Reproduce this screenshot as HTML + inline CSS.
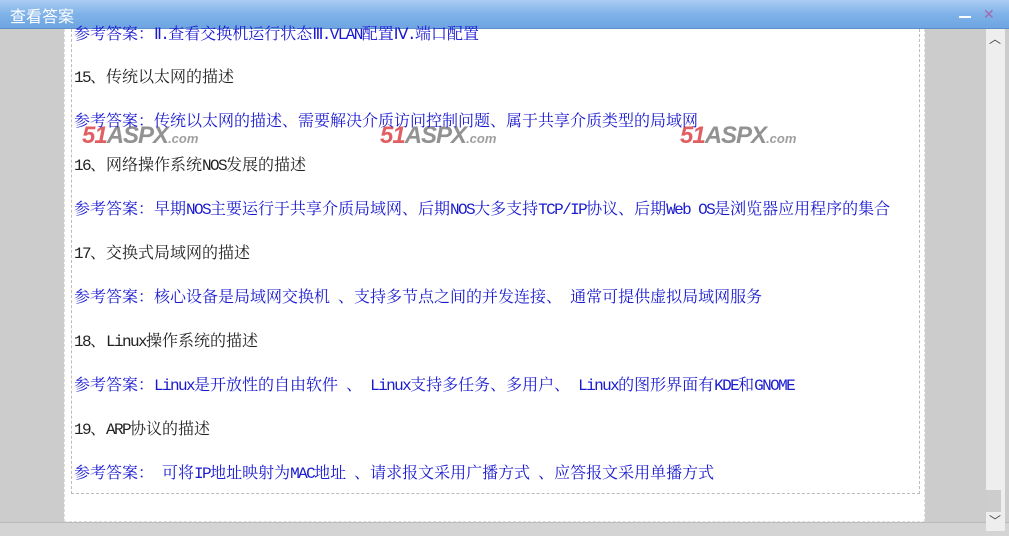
<!DOCTYPE html>
<html><head><meta charset="utf-8"><style>
*{margin:0;padding:0;box-sizing:border-box}
body{width:1009px;height:536px;overflow:hidden;background:#ccc;position:relative;font-family:"Noto Serif CJK SC","Noto Sans CJK SC",serif;}
.title{position:absolute;left:0;top:0;width:1009px;height:29px;background:linear-gradient(#a9cdf2,#7fb2e8 50%,#6da5e2);border-bottom:1px solid #5b8fcc;color:#fff;font:16px "Liberation Sans","Noto Sans CJK SC",sans-serif;padding:3px 0 0 10px}
.min{position:absolute;left:959px;top:16px;width:12px;height:2px;background:#fff}
.x{position:absolute;left:983px;top:6px;color:#a06bb0;font:14px "Liberation Sans",sans-serif}
.panel{position:absolute;left:64px;top:29px;width:861px;height:493px;background:#fff;border:1px dashed #ddd;border-top:none}
.inner{position:absolute;left:71px;top:29px;width:849px;height:465px;border:1px dashed #bbb;border-top:none;overflow:hidden}
.bot{position:absolute;left:0;top:522px;width:1009px;height:14px;background:#d4d4d4;border-top:1px solid #bbb}
.sb{position:absolute;left:986px;top:29px;width:19px;height:502px;background:#eee}
.thumb{position:absolute;left:986px;top:490px;width:15px;height:22px;background:#cdcdcd}
.l{position:absolute;left:74px;font-size:16px;line-height:20px;white-space:nowrap;color:#222}
.l span{font-family:"Liberation Mono",monospace;font-size:16px;letter-spacing:-1.6px}
.a{color:#1a1ad0}
.wm{position:absolute;font:italic bold 24px "Liberation Sans",sans-serif;letter-spacing:-1px;opacity:.8}
.wm b{color:#d9383c}.wm i{color:#777}.wm s{text-decoration:none;font-size:13px;color:#888;letter-spacing:0}
</style></head><body>
<div class="title">查看答案</div><div class="min"></div><div class="x">✕</div>
<div class="panel"></div>
<div class="inner"></div>
<div class="wm" style="left:82px;top:122px"><b>51</b><i>ASPX</i><s>.com</s></div>
<div class="wm" style="left:380px;top:122px"><b>51</b><i>ASPX</i><s>.com</s></div>
<div class="wm" style="left:680px;top:122px"><b>51</b><i>ASPX</i><s>.com</s></div>
<div class="l a" style="top:23px">参考答案：<span>Ⅱ.</span>查看交换机运行状态<span>Ⅲ.VLAN</span>配置<span>Ⅳ.</span>端口配置</div>
<div class="l" style="top:66px"><span>15</span>、传统以太网的描述</div>
<div class="l a" style="top:110px">参考答案：传统以太网的描述、需要解决介质访问控制问题、属于共享介质类型的局域网</div>
<div class="l" style="top:154px"><span>16</span>、网络操作系统<span>NOS</span>发展的描述</div>
<div class="l a" style="top:198px">参考答案：早期<span>NOS</span>主要运行于共享介质局域网、后期<span>NOS</span>大多支持<span>TCP/IP</span>协议、后期<span>Web OS</span>是浏览器应用程序的集合</div>
<div class="l" style="top:242px"><span>17</span>、交换式局域网的描述</div>
<div class="l a" style="top:286px">参考答案：核心设备是局域网交换机<span> </span>、支持多节点之间的并发连接、<span> </span>通常可提供虚拟局域网服务</div>
<div class="l" style="top:330px"><span>18</span>、<span>Linux</span>操作系统的描述</div>
<div class="l a" style="top:374px">参考答案：<span>Linux</span>是开放性的自由软件<span> </span>、<span> Linux</span>支持多任务、多用户、<span> Linux</span>的图形界面有<span>KDE</span>和<span>GNOME</span></div>
<div class="l" style="top:418px"><span>19</span>、<span>ARP</span>协议的描述</div>
<div class="l a" style="top:462px">参考答案：<span> </span>可将<span>IP</span>地址映射为<span>MAC</span>地址<span> </span>、请求报文采用广播方式<span> </span>、应答报文采用单播方式</div>
<div class="bot"></div>
<div class="sb"></div><div class="thumb"></div>
<div style="position:absolute;left:989px;top:30px;font:12px 'Liberation Sans';color:#444">︿</div>
<div style="position:absolute;left:989px;top:512px;font:12px 'Liberation Sans';color:#444">﹀</div>
</body></html>
